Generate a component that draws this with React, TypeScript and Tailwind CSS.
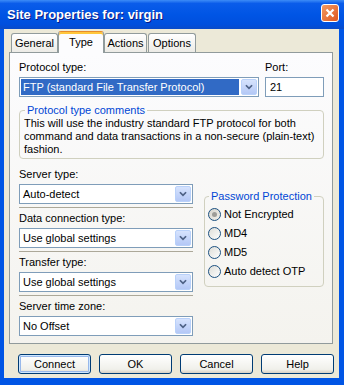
import React from 'react';

const Chevron: React.FC = () => (
  <svg width="16" height="16" viewBox="0 0 16 16">
    <path d="M4.5 6 L8 9.5 L11.5 6" fill="none" stroke="#4D6185" strokeWidth="2" />
  </svg>
);

const Combo: React.FC<{ value: string; selected?: boolean; className?: string }> = ({ value, selected, className }) => (
  <div className={`flex h-[20px] border border-[#7F9DB9] bg-white p-[1px] ${className ?? ''}`}>
    <div className={`flex flex-1 items-center pl-[2px] ${selected ? 'bg-[#316AC5] text-white' : 'text-black'}`}>
      {value}
    </div>
    <div className="ml-[2px] flex h-full w-[16px] items-center justify-center rounded-[2px] border border-[#B9D1FA] bg-[linear-gradient(to_bottom,#D6E3FD,#B4C8F6)]">
      <Chevron />
    </div>
  </div>
);

const Radio: React.FC<{ checked?: boolean; id: string }> = ({ checked, id }) => (
  <svg width="13" height="13" viewBox="0 0 13 13" className="shrink-0">
    <defs>
      <linearGradient id={id} x1="0" y1="0" x2="1" y2="1">
        <stop offset="0" stopColor={checked ? '#D4D3CC' : '#DCDCD6'} />
        <stop offset="1" stopColor={checked ? '#F2F1EC' : '#FFFFFF'} />
      </linearGradient>
    </defs>
    <circle cx="6.5" cy="6.5" r="6" fill={`url(#${id})`} stroke="#1C5180" />
    {checked && <circle cx="6.5" cy="6.5" r="2.5" fill="#9C9C98" />}
  </svg>
);

const Tab: React.FC<{ label: string; active?: boolean; className?: string }> = ({ label, active, className }) =>
  active ? (
    <div
      className={`relative z-10 -mb-px flex h-[22px] items-center justify-center rounded-t-[3px] border border-b-0 border-[#919B9C] border-t-[#E68B2C] bg-[#FCFCFE] shadow-[inset_0_2px_0_#FFC73C] ${className ?? ''}`}
    >
      {label}
    </div>
  ) : (
    <div
      className={`flex h-[19px] items-center justify-center rounded-t-[3px] border border-b-0 border-[#919B9C] bg-[linear-gradient(to_bottom,#FFFFFF,#ECEBE6)] ${className ?? ''}`}
    >
      {label}
    </div>
  );

const Button: React.FC<{ label: string; isDefault?: boolean }> = ({ label, isDefault }) => (
  <button
    className={`flex h-[20px] w-[73px] items-center justify-center rounded-[3px] border border-[#003C74] bg-[linear-gradient(to_bottom,#FFFFFF,#F0F0EA_80%,#D6D0C5)] text-black ${
      isDefault ? 'shadow-[inset_0_0_0_1px_#CEE7FF,inset_0_0_0_2px_#98B8EA]' : ''
    }`}
  >
    {label}
  </button>
);

const App: React.FC = () => {
  const leftFields = [
    { label: 'Server type:', value: 'Auto-detect' },
    { label: 'Data connection type:', value: 'Use global settings' },
    { label: 'Transfer type:', value: 'Use global settings' },
    { label: 'Server time zone:', value: 'No Offset' },
  ];
  const radios = ['Not Encrypted', 'MD4', 'MD5', 'Auto detect OTP'];

  return (
    <div className="flex h-[385px] w-[344px] flex-col bg-[#0055E5] font-['Liberation_Sans',Arial,sans-serif] text-[11px] leading-[13px] text-black">
      {/* Title bar */}
      <div className="flex h-[29px] shrink-0 items-start bg-[linear-gradient(to_bottom,#3D8CF7_0%,#0A5CEA_12%,#0055E5_50%,#004FDD_85%,#0A4BC8_100%)]">
        <div className="mt-[7px] flex-1 pl-[7px] text-[13px] font-bold leading-[15px] text-white [text-shadow:1px_1px_0_#0A1883]">
          Site Properties for: virgin
        </div>
        <div className="mt-[4px] mr-[5px] flex h-[18px] w-[18px] items-center justify-center rounded-[3px] border border-white bg-[linear-gradient(to_bottom_right,#F29A62,#E0571F)]">
          <svg width="10" height="10" viewBox="0 0 10 10">
            <path d="M1.5 1.5 L8.5 8.5 M8.5 1.5 L1.5 8.5" stroke="#FFFFFF" strokeWidth="2.2" />
          </svg>
        </div>
      </div>

      {/* Frame */}
      <div className="flex flex-1 flex-col pl-[4px] pr-[5px] pb-[7px]">
        <div className="flex flex-1 flex-col bg-[#ECE9D8]">
          {/* Tabs */}
          <div className="ml-[7px] flex h-[23px] items-end">
            <Tab label="General" className="w-[47px]" />
            <Tab label="Type" active className="w-[46px]" />
            <Tab label="Actions" className="w-[43px]" />
            <Tab label="Options" className="ml-[1px] w-[48px]" />
          </div>

          {/* Panel */}
          <div className="ml-[5px] flex h-[292px] w-[324px] flex-col border border-[#919B9C] bg-[linear-gradient(to_bottom,#FCFCFE,#F4F3EE)] pt-[8px] pl-[9px] pr-[8px]">
            <div className="flex gap-[6px]">
              <div className="flex w-[240px] flex-col gap-[3px]">
                <span>Protocol type:</span>
                <Combo value="FTP (standard File Transfer Protocol)" selected />
              </div>
              <div className="flex w-[59px] flex-col gap-[3px]">
                <span>Port:</span>
                <div className="flex h-[20px] items-center border border-[#7F9DB9] bg-white pl-[4px]">21</div>
              </div>
            </div>

            <fieldset className="mt-[7px] rounded-[4px] border border-[#D0D0BF] px-[4px] pb-[2px]">
              <legend className="ml-[1px] px-[2px] text-[#0046D5]">Protocol type comments</legend>
              <p>
                This will use the industry standard FTP protocol for both command and data transactions in a non-secure (plain-text)
                fashion.
              </p>
            </fieldset>

            <div className="mt-[9px] flex gap-[11px]">
              <div className="flex w-[174px] flex-col">
                {leftFields.map((f, i) => (
                  <div key={f.label} className={`flex flex-col ${i > 0 ? 'mt-[4px]' : ''}`}>
                    <span>{f.label}</span>
                    <Combo value={f.value} className="mt-[3px]" />
                    {i < leftFields.length - 1 && <div className="mt-[3px] h-px bg-[#ACA899]" />}
                  </div>
                ))}
              </div>

              <fieldset className="mt-[22px] w-[120px] self-start rounded-[4px] border border-[#D0D0BF] pl-[3px] pt-[2px] pb-[5px]">
                <legend className="ml-[1px] px-[2px] text-[#0046D5]">Password Protection</legend>
                {radios.map((r, i) => (
                  <div key={r} className="flex h-[19px] items-center gap-[3px]">
                    <Radio id={`rg${i}`} checked={i === 0} />
                    <span>{r}</span>
                  </div>
                ))}
              </fieldset>
            </div>
          </div>

          {/* Buttons */}
          <div className="mt-[10px] flex gap-[8px] pl-[14px]">
            <Button label="Connect" isDefault />
            <Button label="OK" />
            <Button label="Cancel" />
            <Button label="Help" />
          </div>
        </div>
      </div>
    </div>
  );
};

export default App;
